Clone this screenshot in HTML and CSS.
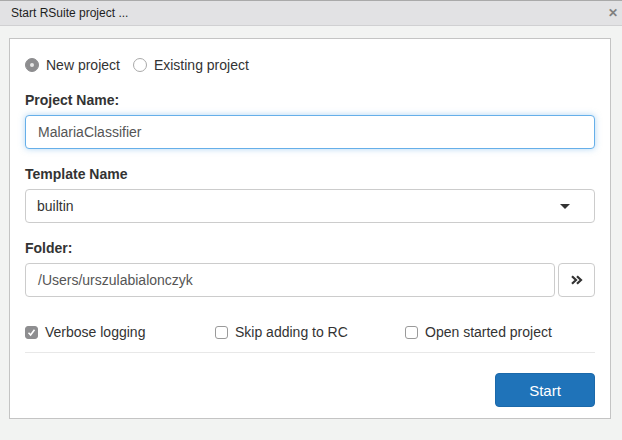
FILE: index.html
```html
<!DOCTYPE html>
<html>
<head>
<meta charset="utf-8">
<link rel="stylesheet" href="styles.css">
</head>
<body>
<div class="titlebar">
  <span class="title">Start RSuite project ...</span>
  <span class="close">&#x2715;</span>
</div>
<div class="main">
  <div class="panel">
    <div class="radios">
      <label class="radio"><span class="rbox checked"></span>New project</label>
      <label class="radio"><span class="rbox"></span>Existing project</label>
    </div>
    <div class="group">
      <div class="label">Project Name:</div>
      <div class="input focus">MalariaClassifier</div>
    </div>
    <div class="group">
      <div class="label">Template Name</div>
      <div class="input select">builtin<span class="caret"></span></div>
    </div>
    <div class="group last">
      <div class="label">Folder:</div>
      <div class="inrow">
        <div class="input grow">/Users/urszulabialonczyk</div>
        <div class="btn-browse">
          <svg width="12" height="10" viewBox="0 0 12 10"><path d="M1 1.2 L5 5 L1 8.8 M6 1.2 L10 5 L6 8.8" fill="none" stroke="#333" stroke-width="2.2"/></svg>
        </div>
      </div>
    </div>
    <div class="checks">
      <label class="check"><span class="cbox checked"><svg width="9" height="9" viewBox="0 0 9 9"><path d="M1.5 4.8 L3.6 7 L7.5 1.8" fill="none" stroke="#fff" stroke-width="1.6"/></svg></span>Verbose logging</label>
      <label class="check"><span class="cbox"></span>Skip adding to RC</label>
      <label class="check"><span class="cbox"></span>Open started project</label>
    </div>
    <div class="sep"></div>
    <div class="actions">
      <div class="btn-start">Start</div>
    </div>
  </div>
</div>
</body>
</html>
```

FILE: styles.css
```css
html, body {
  margin: 0;
  padding: 0;
}
body {
  width: 622px;
  height: 440px;
  background: #f2f3f2;
  font-family: "Liberation Sans", Arial, sans-serif;
  font-size: 14px;
  color: #333;
  overflow: hidden;
}
.titlebar {
  box-sizing: border-box;
  height: 26px;
  background: #e2e2e4;
  border-top: 1px solid #a9a9a9;
  border-bottom: 1px solid #d0d0d2;
  display: flex;
  align-items: center;
  justify-content: space-between;
  padding: 0 4px 0 11px;
}
.title {
  font-size: 12px;
  color: #1e1e1e;
}
.close {
  font-size: 12px;
  color: #808080;
  font-weight: bold;
}
.main {
  padding: 12px 11px 0 9px;
}
.panel {
  background: #fff;
  border: 1px solid #c4c4c4;
  padding: 16px 15px 11px 15px;
}
.radios {
  display: flex;
  height: 20px;
  line-height: 20px;
  margin-bottom: 15px;
}
.radio {
  display: flex;
  align-items: center;
  margin-right: 13px;
}
.rbox {
  box-sizing: border-box;
  width: 14px;
  height: 14px;
  border-radius: 50%;
  border: 1px solid #a9a9a9;
  background: #fff;
  margin-right: 7px;
  position: relative;
}
.rbox.checked {
  background: #8d8d8f;
  border-color: #8d8d8f;
}
.rbox.checked::after {
  content: "";
  position: absolute;
  left: 4px;
  top: 4px;
  width: 4px;
  height: 4px;
  border-radius: 50%;
  background: #e6e6e6;
}
.group {
  margin-bottom: 15px;
}
.group.last {
  margin-bottom: 25px;
}
.label {
  font-weight: bold;
  line-height: 20px;
  margin-bottom: 5px;
}
.input {
  box-sizing: border-box;
  height: 34px;
  border: 1px solid #ccc;
  border-radius: 4px;
  padding: 0 12px;
  line-height: 32px;
  color: #555;
  background: #fff;
}
.input.focus {
  border-color: #66afe9;
  box-shadow: 0 0 6px rgba(102, 175, 233, 0.5);
}
.select {
  display: flex;
  justify-content: space-between;
  align-items: center;
  color: #333;
  padding-left: 11px;
}
.caret {
  width: 0;
  height: 0;
  border-left: 5px solid transparent;
  border-right: 5px solid transparent;
  border-top: 5px solid #333;
  margin-right: 12px;
}
.inrow {
  display: flex;
  gap: 3px;
}
.grow {
  flex: 1;
}
.btn-browse {
  box-sizing: border-box;
  width: 37px;
  height: 34px;
  border: 1px solid #ccc;
  border-radius: 4px;
  display: flex;
  align-items: center;
  justify-content: center;
  background: #fff;
}
.checks {
  display: grid;
  grid-template-columns: 1fr 1fr 1fr;
  line-height: 20px;
  height: 20px;
  margin-bottom: 10px;
}
.check {
  display: flex;
  align-items: center;
}
.cbox {
  box-sizing: border-box;
  width: 13px;
  height: 13px;
  border: 1px solid #9a9a9a;
  border-radius: 3px;
  background: #fff;
  margin-right: 7px;
  display: flex;
  align-items: center;
  justify-content: center;
}
.cbox.checked {
  background: #8e8e90;
  border-color: #8e8e90;
}
.sep {
  height: 1px;
  background: #e8e8e8;
  margin-bottom: 20px;
}
.actions {
  display: flex;
  justify-content: flex-end;
}
.btn-start {
  box-sizing: border-box;
  width: 100px;
  height: 34px;
  border-radius: 4px;
  background: #1f73b9;
  border: 1px solid #1b69aa;
  color: #fff;
  font-size: 15px;
  display: flex;
  align-items: center;
  justify-content: center;
}
```
